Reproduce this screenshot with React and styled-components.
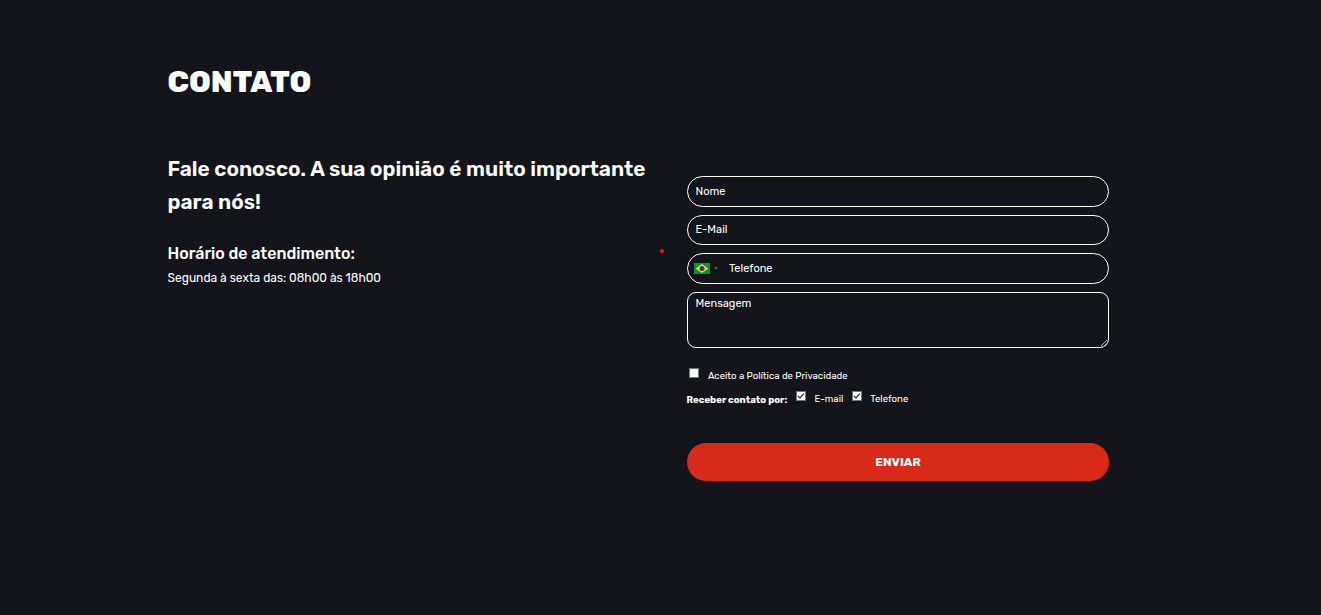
import React from 'react';
import styled, { createGlobalStyle } from 'styled-components';

const GlobalStyle = createGlobalStyle`
  *, *::before, *::after { box-sizing: border-box; }
  body {
    margin: 0;
    background: #14151a;
    color: #fff;
    font-family: Rubik, Roboto, "Liberation Sans", sans-serif;
  }
`;

const Section = styled.section`
  min-height: 615px;
  padding: 61px 212px 0 167.5px;
  background: #14151a;
`;

const Title = styled.h1`
  margin: 0;
  font-size: 30px;
  line-height: 42px;
  font-weight: 800;
  white-space: nowrap;
`;

const Columns = styled.div`
  display: grid;
  grid-template-columns: 492.5px 17px 422px;
  column-gap: 5px;
  margin-top: 49px;
`;

const Info = styled.div`
  display: flex;
  flex-direction: column;
  min-width: 0;
  padding-top: 1px;
  white-space: nowrap;
`;

const Lead = styled.h2`
  margin: 0 0 23px;
  font-size: 20.83px;
  line-height: 33px;
  font-weight: 600;
`;

const Subtitle = styled.h3`
  margin: 0;
  font-size: 16.05px;
  line-height: 24px;
  font-weight: 500;
`;

const Hours = styled.p`
  margin: 3px 0 0;
  font-size: 12.03px;
  line-height: 18px;
`;

const Dot = styled.span`
  width: 4px;
  height: 4px;
  margin: 97px 0 0 -5px;
  border-radius: 50%;
  background: #e31b1b;
`;

const Form = styled.form`
  display: flex;
  flex-direction: column;
  padding-top: 24px;
`;

const Field = styled.div`
  display: flex;
  align-items: center;
  height: ${({ $height }) => $height}px;
  margin-bottom: 8px;
  padding: 0 8px;
  padding-left: ${({ $inset }) => $inset || 7.6}px;
  border: 1px solid #fff;
  border-radius: 16px;
`;

const fieldText = `
  min-width: 0;
  padding: 0;
  border: 0;
  outline: 0;
  background: transparent;
  color: #fff;
  font-family: inherit;
  font-size: 11px;
  line-height: 16px;
  &::placeholder { color: #fff; opacity: 1; }
`;

const Input = styled.input`
  ${fieldText}
  flex: 1;
  height: 16px;
`;

const MessageBox = styled.div`
  position: relative;
  display: flex;
  height: 56px;
  padding: 3px 8px 2px 7.6px;
  border: 1px solid #fff;
  border-radius: 9px;
`;

const Message = styled.textarea`
  ${fieldText}
  flex: 1;
  resize: none;
`;

const Grip = styled.svg`
  position: absolute;
  right: 0;
  bottom: 0;
`;

const Country = styled.span`
  display: flex;
  align-items: center;
  gap: 4px;
  width: 35px;
`;

const Consent = styled.label`
  display: flex;
  margin: 20px 0 0 2px;
  height: 16px;
`;

const Option = styled.label`
  display: flex;
  margin-left: ${({ $gap }) => $gap}px;
`;

const Preferences = styled.div`
  display: flex;
  height: 16px;
  margin-top: 7px;
`;

const Caption = styled.span`
  padding-top: ${({ $top }) => $top || 0}px;
  margin-left: ${({ $gap }) => $gap || 0}px;
  font-size: 9.6px;
  line-height: 14px;
  white-space: nowrap;
`;

const GroupCaption = styled(Caption)`
  width: 100.5px;
  margin-left: -0.5px;
  font-weight: 700;
`;

const Checkbox = styled.svg`
  width: 10px;
  height: 10px;
  flex: none;
`;

const Submit = styled.button`
  height: 38px;
  margin-top: 36px;
  padding: 0;
  border: 0;
  border-radius: 19px;
  background: #d92918;
  color: #fff;
  font-family: inherit;
  font-size: 12px;
  font-weight: 700;
  line-height: 38px;
`;

function Check({ checked }) {
  return (
    <Checkbox viewBox="0 0 10 10">
      <rect x=".5" y=".5" width="9" height="9" fill="#fff" stroke="#777" />
      {checked && <path d="M2 5 4 7 8 2.7" fill="none" stroke="#222" strokeWidth="1.2" />}
    </Checkbox>
  );
}

function BrazilFlag() {
  return (
    <svg width="16" height="11" viewBox="0 0 16 11">
      <rect width="16" height="11" fill="#00913f" />
      <path d="M8 1 14.3 5.5 8 10 1.7 5.5Z" fill="#ffe600" />
      <circle cx="8" cy="5.5" r="2.5" fill="#20308e" />
      <path d="M5.8 4.8Q8.5 4.6 10.2 6.5" fill="none" stroke="#6f88b4" strokeWidth=".4" />
    </svg>
  );
}

export default function App() {
  return (
    <>
      <GlobalStyle />
      <Section>
        <Title>CONTATO</Title>
        <Columns>
          <Info>
            <Lead>Fale conosco. A sua opinião é muito importante<br />para nós!</Lead>
            <Subtitle>Horário de atendimento:</Subtitle>
            <Hours>Segunda à sexta das: 08h00 às 18h00</Hours>
          </Info>
          <Dot />
          <Form onSubmit={(e) => e.preventDefault()}>
            <Field $height={31}><Input placeholder="Nome" /></Field>
            <Field $height={30}><Input placeholder="E-Mail" /></Field>
            <Field $height={31} $inset={6}>
              <Country>
                <BrazilFlag />
                <svg width="4" height="3" viewBox="0 0 4 3"><path d="M0 0H4L2 3Z" fill="#555" /></svg>
              </Country>
              <Input placeholder="Telefone" />
            </Field>
            <MessageBox>
              <Message placeholder="Mensagem" />
              <Grip width="8" height="8" viewBox="0 0 8 8">
                <path d="M1 7 7 1M4.500 7 7 4.500" stroke="#ccc" strokeWidth=".9" />
              </Grip>
            </MessageBox>
            <Consent>
              <Check />
              <Caption $gap={9} $top={1}>Aceito a Política de Privacidade</Caption>
            </Consent>
            <Preferences>
              <GroupCaption $top={2}>Receber contato por:</GroupCaption>
              <Option $gap={9}><Check checked /><Caption $gap={8.5} $top={1}>E-mail</Caption></Option>
              <Option $gap={8.5}><Check checked /><Caption $gap={8.5} $top={1}>Telefone</Caption></Option>
            </Preferences>
            <Submit>ENVIAR</Submit>
          </Form>
        </Columns>
      </Section>
    </>
  );
}
